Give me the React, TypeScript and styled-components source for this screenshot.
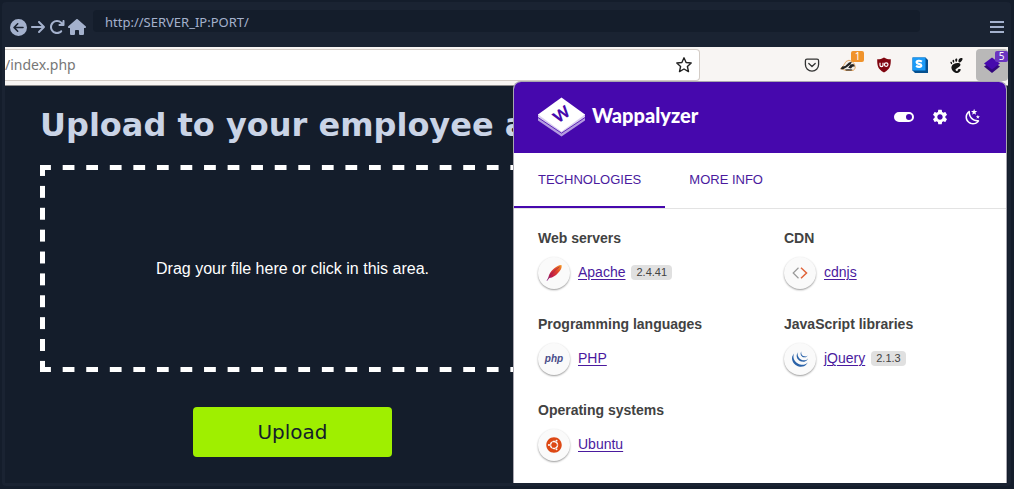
import React from "react";
import styled, { createGlobalStyle } from "styled-components";
import { FaArrowRight, FaArrowRotateRight, FaCircleArrowLeft, FaHouse } from "react-icons/fa6";
import { FaUbuntu } from "react-icons/fa";
import { SiGnome, SiJquery } from "react-icons/si";
import { MdSettings } from "react-icons/md";

const GlobalStyle = createGlobalStyle`
  *, *::before, *::after { box-sizing: border-box; }
  body { margin: 0; background: #141d2b; }
  button, input { font: inherit; }
`;

const sans = `"Liberation Sans", Arial, sans-serif`;

const Page = styled.div`
  min-height: 100vh;
  display: flex;
  padding: 2px 3px 3px 2px;
  font-family: ${sans};
`;

const Window = styled.div`
  flex: 1;
  min-width: 0;
  display: flex;
  flex-direction: column;
  padding: 0 3px 3px;
  background: #1a2332;
  border-radius: 4px;
`;

const TitleBar = styled.header`
  display: flex;
  height: 45px;
  padding: 8px 4px 0 5px;
`;

const NavButtons = styled.nav`
  display: flex;
  align-items: center;
  gap: 3px;
  height: 34px;
  width: 83px;
`;

const BarButton = styled.button<{ $size?: number }>`
  display: flex;
  padding: 0;
  border: 0;
  background: none;
  color: #a4b1cd;
  font-size: ${(p) => p.$size ?? 16}px;
`;

const Address = styled.input`
  flex: 1;
  min-width: 0;
  height: 22px;
  padding: 2px 12px 0;
  border: 0;
  border-radius: 4px;
  background: #141d2b;
  color: #a4b1cd;
  font: 13px/20px "Noto Sans", sans-serif;
`;

const MenuSlot = styled.div`
  display: flex;
  align-items: center;
  justify-content: flex-end;
  width: 84px;
  height: 34px;
`;

const Viewport = styled.div`
  position: relative;
  flex: 1;
  display: flex;
  flex-direction: column;
  background: #141d2b;
`;

const Toolbar = styled.div`
  display: flex;
  align-items: flex-start;
  height: 39px;
  padding-top: 2px;
  background: #f8f5f3;
  border-bottom: 1px solid #8e8c8c;
`;

const UrlBox = styled.div`
  display: flex;
  align-items: center;
  flex: 1;
  height: 32px;
  padding-right: 6px;
  background: #fff;
  border: solid #d3ccc6;
  border-width: 1px 1px 1px 0;
  border-radius: 0 4px 4px 0;
`;

const UrlInput = styled.input`
  flex: 1;
  min-width: 0;
  padding: 0;
  border: 0;
  background: none;
  color: #777;
  font: 14px/20px "Noto Sans", sans-serif;
`;

const Extensions = styled.div`
  display: flex;
  align-items: center;
  gap: 4px;
  width: 308px;
  justify-content: flex-end;
  height: 32px;
`;

const ToolButton = styled.button<{ $active?: boolean }>`
  position: relative;
  display: grid;
  place-items: center;
  width: 32px;
  height: 32px;
  padding: 0;
  border: 0;
  border-radius: 4px;
  background: ${(p) => (p.$active ? "#b9b8b8" : "none")};
  color: #151515;
`;

const StarButton = styled(ToolButton)`
  width: 18px;
`;

const Badge = styled.span<{ $color: string }>`
  position: absolute;
  top: 2px;
  right: 0;
  width: 13px;
  height: 11px;
  border-radius: 2px;
  background: ${(p) => p.$color};
  color: #fff;
  font: 10px/11px "Noto Sans", sans-serif;
  text-align: center;
`;

const Uploader = styled.main`
  display: flex;
  flex-direction: column;
  align-items: center;
  width: 505px;
  max-width: 100%;
  margin-left: 35px;
  padding-bottom: 26px;
`;

const Title = styled.h1`
  align-self: flex-start;
  margin: 19px 0 20px;
  color: #cad4e6;
  font: bold 32px/40px "DejaVu Sans", sans-serif;
  white-space: nowrap;
`;

const dash = (dir: string) =>
  `linear-gradient(${dir}, #fff 26%, transparent 26% 74%, #fff 74%)`;

const DropZone = styled.label`
  display: grid;
  place-items: center;
  width: 100%;
  height: 207px;
  border: 5px solid transparent;
  background-image: ${dash("to right")}, ${dash("to right")}, ${dash("to bottom")}, ${dash("to bottom")};
  background-origin: padding-box;
  background-clip: border-box;
  background-size: 24px 5px, 24px 5px, 5px 22px, 5px 22px;
  background-position: 0 -5px, 0 calc(100% + 5px), -5px 0, calc(100% + 5px) 0;
  background-repeat: round no-repeat, round no-repeat, no-repeat round, no-repeat round;
  color: #fff;
  font-size: 16px;
  line-height: 20px;
`;

const FileInput = styled.input`
  display: none;
`;

const UploadButton = styled.button`
  width: 199px;
  height: 50px;
  margin-top: 35px;
  border: 0;
  border-radius: 4px;
  background: #9fef00;
  color: #141d2b;
  font: 20px/24px "DejaVu Sans", sans-serif;
`;

const Popup = styled.aside`
  position: absolute;
  top: 34px;
  right: 1px;
  bottom: 0;
  width: 494px;
  border: 1px solid #a9a7b0;
  border-bottom: 0;
  border-radius: 8px 8px 0 0;
  background: #fff;
  overflow: hidden;
`;

const PopupHeader = styled.div`
  display: flex;
  align-items: center;
  height: 71px;
  padding: 0 24px 2px;
  background: #4608ad;
  color: #fff;
`;

const Brand = styled.span`
  flex: 1;
  margin-left: 7px;
  padding-bottom: 4px;
  font: 900 20px/24px Lato, sans-serif;
`;

const HeaderActions = styled.div`
  display: flex;
  align-items: center;
  gap: 15px;
`;

const HeaderButton = styled.button`
  display: flex;
  padding: 0;
  border: 0;
  background: none;
  color: #fff;
  font-size: 18px;
`;

const Tabs = styled.div`
  display: flex;
  height: 56px;
  border-bottom: 1px solid #e3e3e3;
`;

const Tab = styled.button<{ $active?: boolean }>`
  padding: 0 24px;
  border: solid ${(p) => (p.$active ? "#4608ad" : "transparent")};
  border-width: 0 0 2px;
  background: none;
  color: #4a1a9e;
  font: 13px/20px ${sans};
`;

const Categories = styled.div`
  display: grid;
  grid-template-columns: 1fr 1fr;
  row-gap: 25px;
  padding: 19px 0 22px;
`;

const CategoryBlock = styled.section`
  display: flex;
  flex-direction: column;
  gap: 9px;
  padding-left: 24px;
`;

const CategoryName = styled.h2`
  margin: 0;
  color: #424242;
  font: bold 14px/20px ${sans};
`;

const Technology = styled.div`
  display: flex;
  align-items: center;
  height: 32px;
`;

const TechIcon = styled.span`
  display: grid;
  place-items: center;
  width: 32px;
  height: 32px;
  margin-right: 8px;
  border-radius: 50%;
  background: #fafafa;
  box-shadow: 0 1px 2px rgba(0, 0, 0, 0.4);
`;

const TechLink = styled.a`
  padding-bottom: 2px;
  color: #4a1a9e;
  font-size: 14px;
  line-height: 16px;
  text-decoration: underline;
  text-decoration-thickness: 1px;
  text-underline-offset: 2px;
`;

const Version = styled.span`
  margin: 0 0 1px 6px;
  padding: 0 5px;
  border-radius: 4px;
  background: #e0e0e0;
  color: #424242;
  font-size: 11px;
  line-height: 15px;
`;

const PhpMark = styled.span`
  color: #484c89;
  font: italic bold 10px/12px ${sans};
`;

const StarIcon = () => (
  <svg width="18" height="18" viewBox="0 0 18 18" fill="none" stroke="#222" strokeWidth="1.4" strokeLinejoin="round">
    <path d="M9 1.8l2.1 4.7 5.1.5-3.8 3.5 1.1 5.1L9 13l-4.5 2.6 1.1-5.1L1.8 7l5.1-.5z" />
  </svg>
);

const MenuIcon = () => (
  <svg width="14" height="14" viewBox="0 0 14 14" fill="currentColor">
    <path d="M0 1h14v2H0zM0 6h14v2H0zM0 11h14v2H0z" />
  </svg>
);

const PocketIcon = () => (
  <svg width="16" height="16" viewBox="0 0 16 16" fill="none" stroke="#333" strokeWidth="1.3" strokeLinecap="round" strokeLinejoin="round">
    <path d="M3 2.200h10a1.600 1.600 0 011.600 1.600V7.500a6.600 6.600 0 01-13.200 0V3.800A1.600 1.600 0 013 2.200z" />
    <path d="M4.800 6.500L8 9.500l3.200-3" />
  </svg>
);

const BadgerIcon = () => (
  <svg width="16" height="14" viewBox="0 0 16 14">
    <path d="M.5 10.500L3.500 7.500 6 3.500 9 2.200l3 1.300 2.500 2.500.8 4-2 2.500H6L3 11.500z" fill="#f3eee7" stroke="#d98a35" strokeWidth=".7" />
    <path d="M.5 11.200l1.700-2.600 3-.7L9 4.500l3-.7-1.500 2.500-3.700 2.900-3.600 2zM8.200 9.700l2.300-3.200 2.800-.6 1.700 2.300-2.500.6-1.500 1.800zM5 11.600l3.200-.4 4.300.3-1 1H6z" fill="#222" />
  </svg>
);

const UblockIcon = () => (
  <svg width="16" height="16" viewBox="0 0 16 16" fill="none">
    <path d="M8 .5c2 1.300 4 1.800 6.800 1.800 0 6.500-.4 9.700-6.800 13.200C1.600 12 1.200 8.800 1.200 2.300 4 2.300 6 1.800 8 .5z" fill="#800610" />
    <path d="M4 5.800v2.400c0 1.900 3 1.900 3 0V5.800" stroke="#fff" strokeWidth="1.200" />
    <circle cx="10.200" cy="7.600" r="1.800" stroke="#fff" strokeWidth="1.200" />
  </svg>
);

const StylusIcon = () => (
  <svg width="16" height="16" viewBox="0 0 16 16">
    <path d="M.5.500h13L16 3v13H3L.5 13.500z" fill="#06508f" />
    <path d="M.5.500h13v13H.5z" fill="#1b9bf8" />
    <path d="M9.900 4.700C8 3.300 4.600 3.400 4.600 5.200c0 2.100 4.700 1.200 4.700 3.300 0 1.800-3.400 1.800-5.200.4" fill="none" stroke="#fff" strokeWidth="2.200" />
  </svg>
);

const LayersIcon = () => (
  <svg width="16" height="16" viewBox="0 0 16 16">
    <path d="M0 9.500l8-5 8 5-8 6.500z" fill="#32067c" />
    <path d="M0 6.500L8 .5l8 6-8 6z" fill="#4608ad" />
  </svg>
);

const WappalyzerLogo = () => (
  <svg width="47" height="40" viewBox="0 0 47 40">
    <path d="M0 22v1.500l23.500 16L47 23.500V17H0z" fill="#b49be0" />
    <path d="M0 18.500v1.800l23.500 15.800L47 20.300v-1.800z" fill="#d9cdf0" />
    <path d="M0 20.500l23.500 15.600L47 20.500" fill="none" stroke="#4608ad" strokeWidth=".8" />
    <path d="M23.500.500L47 17.500 23.500 34.500 0 17.500z" fill="#fff" />
    <text
      x="23.500"
      y="23"
      transform="rotate(-36 23.500 17.500)"
      textAnchor="middle"
      fill="#4608ad"
      fontFamily="Lato, sans-serif"
      fontWeight="900"
      fontSize="16"
    >
      W
    </text>
  </svg>
);

const ToggleIcon = () => (
  <svg width="24" height="24" viewBox="0 0 24 24" fill="currentColor">
    <path d="M17 7H7a5 5 0 000 10h10a5 5 0 000-10m0 8a3 3 0 110-6 3 3 0 010 6z" />
  </svg>
);

const NightIcon = () => (
  <svg width="18" height="18" viewBox="0 0 24 24" fill="currentColor">
    <path d="M17.75,4.09L15.22,6.03L16.13,9.09L13.5,7.28L10.87,9.09L11.78,6.03L9.25,4.09L12.44,4L13.5,1L14.56,4L17.75,4.09M21.25,11L19.61,12.25L20.2,14.23L18.5,13.06L16.8,14.23L17.39,12.25L15.75,11L17.81,10.95L18.5,9L19.19,10.95L21.25,11M18.97,15.95C19.8,15.87 20.69,17.05 20.16,17.8C19.84,18.25 19.5,18.67 19.08,19.07C15.17,23 8.84,23 4.94,19.07C1.03,15.17 1.03,8.83 4.94,4.93C5.34,4.53 5.76,4.17 6.21,3.85C6.96,3.32 8.14,4.21 8.06,5.04C7.79,7.9 8.75,10.87 10.95,13.06C13.14,15.26 16.1,16.22 18.97,15.95M17.33,17.97C14.5,17.81 11.7,16.64 9.53,14.5C7.36,12.31 6.2,9.5 6.04,6.68C3.23,9.82 3.34,14.64 6.35,17.66C9.37,20.67 14.19,20.78 17.33,17.97Z" />
  </svg>
);

const ApacheIcon = () => (
  <svg width="18" height="18" viewBox="0 0 18 18">
    <defs>
      <linearGradient id="feather" x1="1" y1="0" x2="0" y2="1">
        <stop offset="0" stopColor="#f59a23" />
        <stop offset=".35" stopColor="#e0442c" />
        <stop offset=".65" stopColor="#c41c46" />
        <stop offset="1" stopColor="#7b2a8c" />
      </linearGradient>
    </defs>
    <path d="M16.500 1c.8 2.800-.8 5-3.500 8-2.500 2.800-5 4.500-8.600 5L2 17l-.4-.3 1.700-3.200C4 9.800 6 7.300 8.500 5 11 2.700 13.500 1 16.500 1z" fill="url(#feather)" />
    <path d="M14.500 2.800C10.500 5.500 6.500 9.500 4 13.500" fill="none" stroke="#8d1f4d" strokeWidth=".6" />
  </svg>
);

const CdnjsIcon = () => (
  <svg width="16" height="12" viewBox="0 0 16 12" fill="none" strokeWidth="1.200">
    <path d="M6.500.800L1.200 6l5.300 5.200" stroke="#999" />
    <path d="M9 .8L14.500 6 9 11.200" stroke="#e0643a" strokeWidth="1.500" />
  </svg>
);

type Tech = { category: string; name: string; version?: string; icon: React.ReactNode };

const technologies: Tech[] = [
  { category: "Web servers", name: "Apache", version: "2.4.41", icon: <ApacheIcon /> },
  { category: "CDN", name: "cdnjs", icon: <CdnjsIcon /> },
  { category: "Programming languages", name: "PHP", icon: <PhpMark>php</PhpMark> },
  { category: "JavaScript libraries", name: "jQuery", version: "2.1.3", icon: <SiJquery size={16} color="#2a62a8" /> },
  { category: "Operating systems", name: "Ubuntu", icon: <FaUbuntu size={16} color="#dd4814" /> },
];

export default function App() {
  return (
    <Page>
      <GlobalStyle />
      <Window>
        <TitleBar>
          <NavButtons aria-label="Browser navigation">
            <BarButton $size={17} aria-label="Back"><FaCircleArrowLeft /></BarButton>
            <BarButton aria-label="Forward"><FaArrowRight /></BarButton>
            <BarButton aria-label="Reload"><FaArrowRotateRight /></BarButton>
            <BarButton $size={18} aria-label="Home"><FaHouse /></BarButton>
          </NavButtons>
          <Address aria-label="Address" defaultValue="http://SERVER_IP:PORT/" />
          <MenuSlot>
            <BarButton aria-label="Menu"><MenuIcon /></BarButton>
          </MenuSlot>
        </TitleBar>
        <Viewport>
          <Toolbar>
            <UrlBox>
              <UrlInput aria-label="Page path" defaultValue="/index.php" />
              <StarButton aria-label="Bookmark"><StarIcon /></StarButton>
            </UrlBox>
            <Extensions>
              <ToolButton aria-label="Pocket"><PocketIcon /></ToolButton>
              <ToolButton aria-label="Privacy Badger"><BadgerIcon /><Badge $color="#f0932b">1</Badge></ToolButton>
              <ToolButton aria-label="uBlock Origin"><UblockIcon /></ToolButton>
              <ToolButton aria-label="Stylus"><StylusIcon /></ToolButton>
              <ToolButton aria-label="GNOME"><SiGnome size={15} /></ToolButton>
              <ToolButton aria-label="Wappalyzer" $active><LayersIcon /><Badge $color="#6b35c0">5</Badge></ToolButton>
            </Extensions>
          </Toolbar>
          <Uploader>
            <Title>Upload to your employee a</Title>
            <DropZone>
              Drag your file here or click in this area.
              <FileInput type="file" />
            </DropZone>
            <UploadButton>Upload</UploadButton>
          </Uploader>
          <Popup>
            <PopupHeader>
              <WappalyzerLogo />
              <Brand>Wappalyzer</Brand>
              <HeaderActions>
                <HeaderButton aria-label="Enabled"><ToggleIcon /></HeaderButton>
                <HeaderButton aria-label="Settings"><MdSettings /></HeaderButton>
                <HeaderButton aria-label="Dark mode"><NightIcon /></HeaderButton>
              </HeaderActions>
            </PopupHeader>
            <Tabs>
              <Tab $active>TECHNOLOGIES</Tab>
              <Tab>MORE INFO</Tab>
            </Tabs>
            <Categories>
              {technologies.map((t) => (
                <CategoryBlock key={t.name}>
                  <CategoryName>{t.category}</CategoryName>
                  <Technology>
                    <TechIcon>{t.icon}</TechIcon>
                    <TechLink href="#">{t.name}</TechLink>
                    {t.version && <Version>{t.version}</Version>}
                  </Technology>
                </CategoryBlock>
              ))}
            </Categories>
          </Popup>
        </Viewport>
      </Window>
    </Page>
  );
}
